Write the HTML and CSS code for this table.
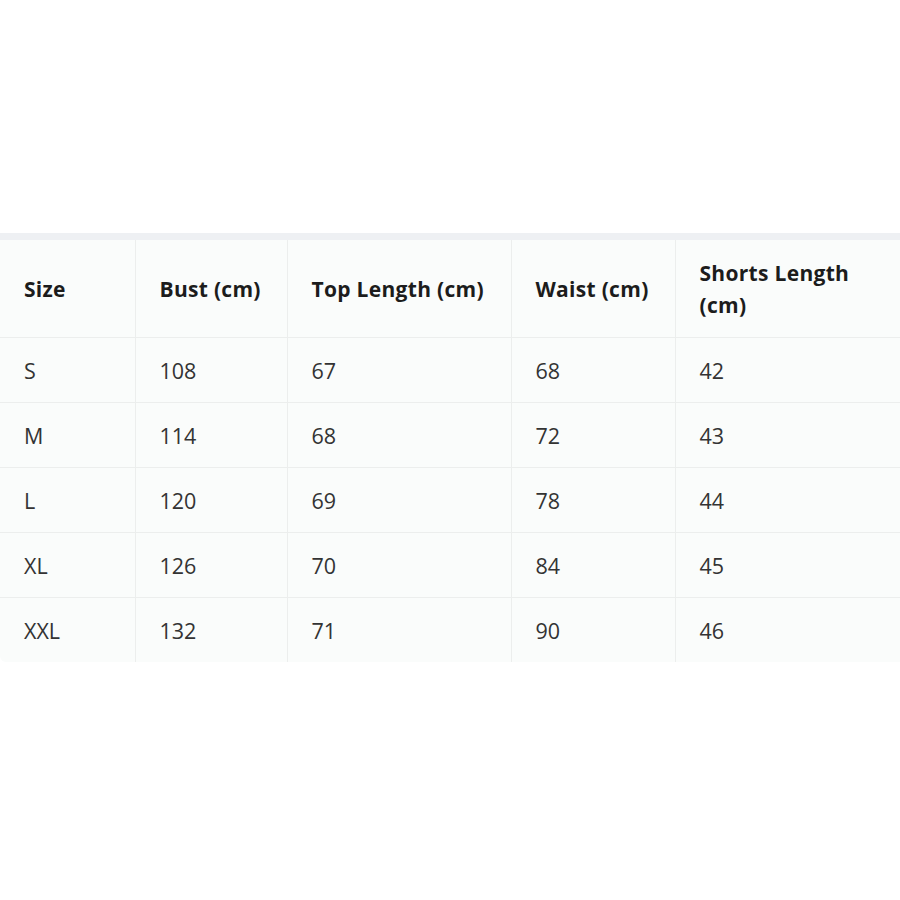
FILE: index.html
```html
<!DOCTYPE html>
<html>
<head>
<meta charset="utf-8">
<link rel="stylesheet" href="styles.css">
</head>
<body>
<div class="wrap">
<table class="sizes">
<colgroup>
<col class="c1"><col class="c2"><col class="c3"><col class="c4"><col class="c5">
</colgroup>
<thead>
<tr><th>Size</th><th>Bust (cm)</th><th>Top Length (cm)</th><th>Waist (cm)</th><th>Shorts Length (cm)</th></tr>
</thead>
<tbody>
<tr><td>S</td><td>108</td><td>67</td><td>68</td><td>42</td></tr>
<tr><td>M</td><td>114</td><td>68</td><td>72</td><td>43</td></tr>
<tr><td>L</td><td>120</td><td>69</td><td>78</td><td>44</td></tr>
<tr><td>XL</td><td>126</td><td>70</td><td>84</td><td>45</td></tr>
<tr><td>XXL</td><td>132</td><td>71</td><td>90</td><td>46</td></tr>
</tbody>
</table>
</div>
</body>
</html>
```
FILE: styles.css
```css
html, body {
  margin: 0;
  padding: 0;
  background: #ffffff;
}
.wrap {
  padding-top: 233px;
  width: 900px;
  overflow: hidden;
}
.sizes {
  border-collapse: collapse;
  table-layout: fixed;
  width: 900px;
  background: #fafcfb;
  border-top: 7px solid #eef0f3;
  border-bottom-left-radius: 6px;
  font-family: "Open Sans", "Noto Sans", sans-serif;
  font-size: 21.5px;
  color: #333333;
}
.c1 { width: 135px; }
.c2 { width: 152px; }
.c3 { width: 224px; }
.c4 { width: 164px; }
.c5 { width: 225px; }
.sizes th, .sizes td {
  text-align: left;
  padding: 0 24px;
  border-left: 1px solid #eceeed;
  border-bottom: 1px solid #eceeed;
}
.sizes th:first-child, .sizes td:first-child {
  border-left: none;
}
.sizes tbody tr:last-child td {
  border-bottom: none;
}
.sizes th {
  height: 97px;
  font-size: 21px;
  font-weight: 700;
  color: #1c1c1c;
  line-height: 32px;
  letter-spacing: 0.3px;
  padding-right: 20px;
}
.sizes td {
  height: 64px;
  font-weight: 400;
}
```
